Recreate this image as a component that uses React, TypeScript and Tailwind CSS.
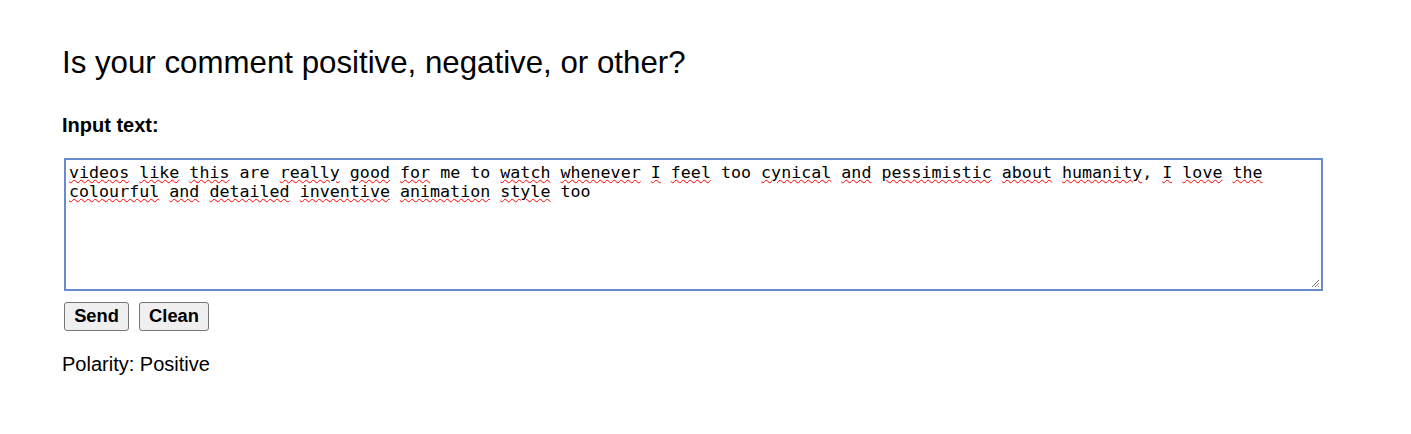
import React from "react";

const words: [string, boolean][] = [
  ["videos", true], ["like", true], ["this", true], ["are", false], ["really", true],
  ["good", true], ["for", true], ["me", false], ["to", false], ["watch", true],
  ["whenever", true], ["I", true], ["feel", true], ["too", false], ["cynical", true],
  ["and", true], ["pessimistic", true], ["about", true], ["humanity", true], [",", false],
  ["I", true], ["love", true], ["the", true], ["colourful", true], ["and", true],
  ["detailed", true], ["inventive", true], ["animation", true], ["style", true], ["too", false],
];

function CommentBox() {
  return (
    <div className="relative ml-[2px] mt-[21px] h-[133px] w-[1259px] border-2 border-[#6a8bcd] bg-white px-[3px] pt-[3px] font-['DejaVu_Sans_Mono',monospace] text-[16.67px] leading-[19.4px] text-black">
      <p className="whitespace-normal break-words">
        {words.map(([w, bad], i) => {
          const space = i > 0 && w !== "," ? " " : "";
          return (
            <React.Fragment key={i}>
              {space}
              <span
                className={
                  bad
                    ? "underline decoration-wavy decoration-[#ff0000] decoration-[1px] underline-offset-[1px]"
                    : ""
                }
              >
                {w}
              </span>
            </React.Fragment>
          );
        })}
      </p>
      <svg
        className="absolute bottom-[1px] right-[1px]"
        width="9"
        height="9"
        viewBox="0 0 9 9"
      >
        <path d="M8 1L1 8M8 4L4 8M8 7L7 8" stroke="#777" strokeWidth="1" />
      </svg>
    </div>
  );
}

export default function App() {
  return (
    <div className="min-h-[434px] bg-white pl-[62px] pt-[45px] font-['Liberation_Sans',Arial,sans-serif] text-black">
      <h2 className="text-[31.25px] leading-[35px] font-normal">
        Is your comment positive, negative, or other?
      </h2>
      <div className="mt-[34px] text-[20px] leading-[23px] font-bold">
        Input text:
      </div>
      <CommentBox />
      <div className="ml-[2px] mt-[11px] flex gap-[10px]">
        <button className="h-[29px] w-[65px] rounded-[3px] border border-[#767676] bg-[#efefef] text-[18.3px] font-bold leading-none text-black">
          Send
        </button>
        <button className="h-[29px] w-[70px] rounded-[3px] border border-[#767676] bg-[#efefef] text-[18.3px] font-bold leading-none text-black">
          Clean
        </button>
      </div>
      <div className="mt-[22px] text-[20px] leading-[23px]">
        Polarity: Positive
      </div>
    </div>
  );
}
